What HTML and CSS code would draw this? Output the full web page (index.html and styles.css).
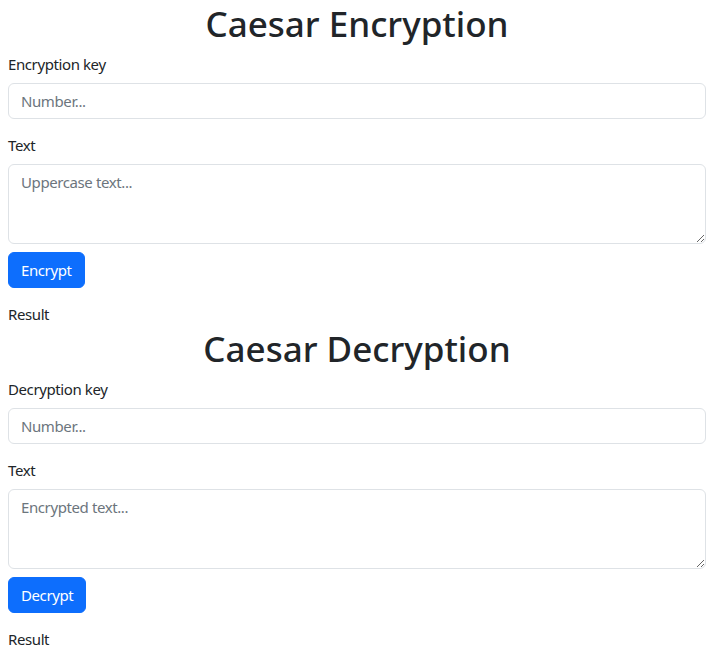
FILE: index.html
```html
<!DOCTYPE html>
<html lang="en">
<head>
<meta charset="utf-8">
<title>Caesar</title>
<link rel="stylesheet" href="styles.css">
</head>
<body>
<main class="page">
  <section class="cipher">
    <h1 class="title">Caesar Encryption</h1>
    <label class="label" for="ekey">Encryption key</label>
    <input class="field" id="ekey" type="text" placeholder="Number...">
    <label class="label label-gap" for="etext">Text</label>
    <textarea class="field area" id="etext" placeholder="Uppercase text..."></textarea>
    <div class="actions"><button class="btn" type="button">Encrypt</button></div>
    <p class="result">Result</p>
  </section>
  <section class="cipher">
    <h1 class="title">Caesar Decryption</h1>
    <label class="label" for="dkey">Decryption key</label>
    <input class="field" id="dkey" type="text" placeholder="Number...">
    <label class="label label-gap" for="dtext">Text</label>
    <textarea class="field area" id="dtext" placeholder="Encrypted text..."></textarea>
    <div class="actions"><button class="btn" type="button">Decrypt</button></div>
    <p class="result">Result</p>
  </section>
</main>
</body>
</html>
```
FILE: styles.css
```css
* { box-sizing: border-box; }
html, body { margin: 0; background: #fff; }
body {
  font-family: "Noto Sans", "Open Sans", sans-serif;
  font-size: 15px;
  line-height: 22px;
  letter-spacing: -0.4px;
  color: #212529;
  overflow: hidden;
}
.page {
  padding: 0 17px 0 8px;
}
.cipher {
  display: flex;
  flex-direction: column;
}
.title {
  margin: 0 0 5px;
  font-size: 35px;
  line-height: 48px;
  font-weight: 500;
  letter-spacing: 0;
  text-align: center;
}
.label {
  display: block;
  margin: 0 0 8px;
}
.label-gap { margin-top: 15px; }
.field {
  display: block;
  width: 100%;
  height: 36px;
  padding: 6px 12px;
  font: inherit;
  letter-spacing: inherit;
  color: #212529;
  background: #fff;
  border: 1px solid #dee2e6;
  border-radius: 6px;
  outline: none;
}
.field::placeholder { color: #6c757d; opacity: 1; }
.area {
  height: 80px;
  resize: vertical;
}
.actions {
  margin-top: 8px;
  display: flex;
}
.btn {
  height: 36px;
  padding: 6px 12px;
  font: inherit;
  letter-spacing: inherit;
  color: #fff;
  background: #0d6efd;
  border: 1px solid #0d6efd;
  border-radius: 6px;
  cursor: pointer;
}
.result {
  margin: 15px 0 0;
}
```
